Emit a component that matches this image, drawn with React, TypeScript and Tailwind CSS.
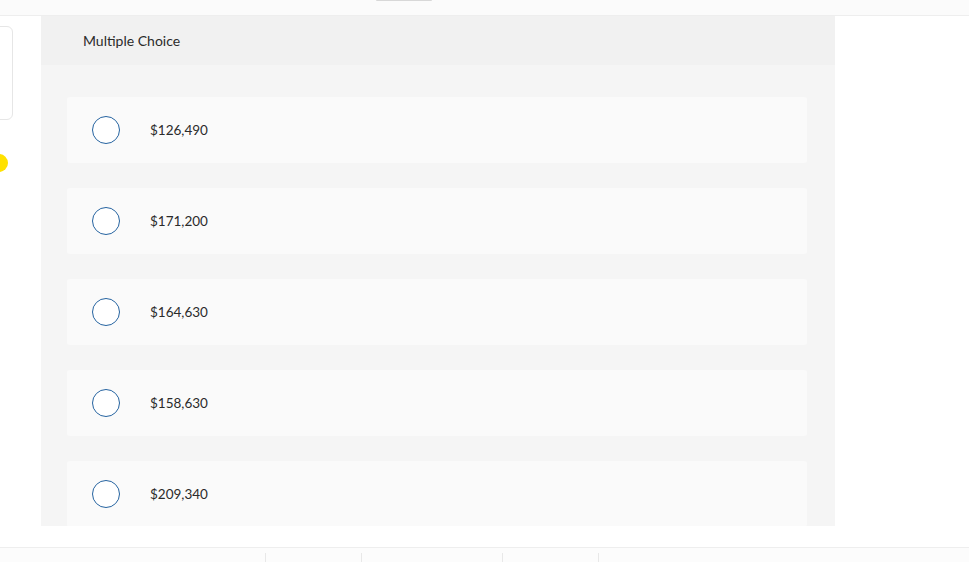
import React from 'react';

const options = ['$126,490', '$171,200', '$164,630', '$158,630', '$209,340'];

function Radio() {
  return <span className="block w-[28px] h-[28px] rounded-full border-[1.5px] border-[#2563a0] bg-white shrink-0" />;
}

export default function App() {
  return (
    <div className="w-[969px] h-[562px] overflow-hidden bg-white flex flex-col text-[#2b2b2b]" style={{ fontFamily: 'Lato, "Open Sans", Arial, sans-serif' }}>
      {/* top strip */}
      <div className="h-[16px] shrink-0 bg-[#fbfbfb] border-b border-[#eeeeee] relative">
        <div className="absolute left-[376px] top-0 w-[56px] h-[1px] rounded-b bg-[#d8d8d8]" />
      </div>

      <div className="flex h-[531px] shrink-0">
        {/* left rail */}
        <div className="w-[41px] shrink-0 relative">
          <div className="absolute -left-[20px] top-[10px] w-[33px] h-[94px] rounded-md border border-[#e6e6e6] bg-white" />
          <div className="absolute -left-[10px] top-[138px] w-[18px] h-[18px] rounded-full bg-[#ffe100]" />
        </div>

        {/* question panel */}
        <div className="w-[794px] shrink-0 flex flex-col">
          <div className="h-[510px] flex flex-col overflow-hidden bg-[#f5f5f5]">
            <div className="h-[49px] shrink-0 bg-[#f1f1f1] flex items-center pl-[42px] pb-[1px] text-[14px]">
              Multiple Choice
            </div>
            <div className="flex flex-col gap-[25px] pt-[32px] pl-[26px] pr-[28px]">
              {options.map((o) => (
                <div key={o} className="h-[66px] shrink-0 rounded-[3px] bg-[#fafafa] flex items-center pl-[25px]">
                  <Radio />
                  <span className="ml-[30px] text-[13.5px]">{o}</span>
                </div>
              ))}
            </div>
          </div>
        </div>
        <div className="flex-1" />
      </div>

      {/* bottom bar */}
      <div className="flex-1 bg-[#fcfcfc] border-t border-[#eeeeee] flex items-end">
        <div className="w-[265px] shrink-0" />
        <div className="w-[96px] h-[9px] border-l border-[#e8e8e8] shrink-0" />
        <div className="w-[141px] h-[9px] border-l border-[#e8e8e8] shrink-0" />
        <div className="w-[96px] h-[9px] border-l border-[#e8e8e8] shrink-0" />
        <div className="w-[1px] h-[9px] border-l border-[#e8e8e8] shrink-0" />
      </div>
    </div>
  );
}
